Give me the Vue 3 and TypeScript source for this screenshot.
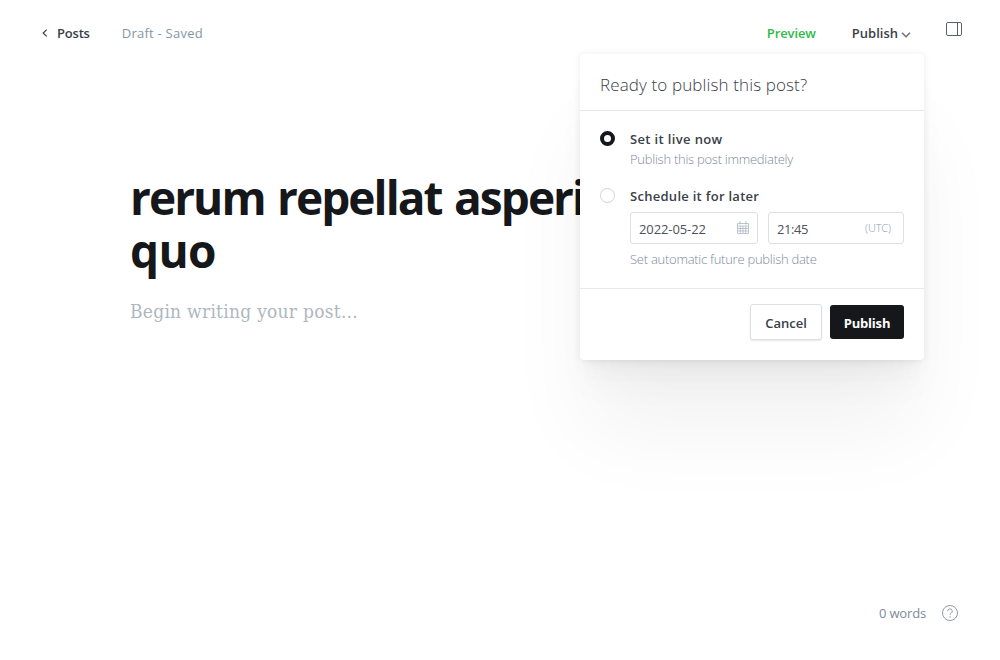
<script setup lang="ts">
import { ref } from 'vue'

type PublishMode = 'now' | 'later'

const mode = ref<PublishMode>('now')
const date = ref('2022-05-22')
const time = ref('21:45')
const wordCount = ref(0)
</script>

<template>
  <div class="editor">
    <header class="bar">
      <a class="back">
        <svg class="chev-left" viewBox="0 0 6 8" width="6" height="8"><path d="M4.7 .6 1.2 4l3.5 3.4" /></svg>
        <span class="posts">Posts</span>
      </a>
      <span class="status">Draft - Saved</span>
      <nav class="actions">
        <span class="preview">Preview</span>
        <span class="publish-trigger">
          <span class="publish-label">Publish</span>
          <svg viewBox="0 0 10 6" width="10" height="6"><path d="M1 .8l4 4 4-4" /></svg>
        </span>
        <svg class="sidebar-icon" viewBox="0 0 16 14" width="16" height="14">
          <rect x=".5" y=".5" width="15" height="13" rx="1.4" />
          <path d="M11.5 .5v13" />
        </svg>
      </nav>

      <section class="popup">
        <h2 class="popup-title"><span>Ready to publish this post?</span></h2>
        <div class="options">
          <div class="option" @click="mode = 'now'">
            <i class="radio" :class="{ on: mode === 'now' }"></i>
            <div class="option-body">
              <div class="label live">Set it live now</div>
              <div class="desc immediate">Publish this post immediately</div>
            </div>
          </div>
          <div class="option second" @click="mode = 'later'">
            <i class="radio" :class="{ on: mode === 'later' }"></i>
            <div class="option-body">
              <div class="label later">Schedule it for later</div>
              <div class="fields">
                <div class="field date">
                  <span class="date-text">{{ date }}</span>
                  <svg class="calendar" viewBox="0 0 12 13" width="12" height="13">
                    <path d="M.5 2.5h11v10H.5zM.5 5h11M.5 7.5h11M.5 10h11M3.3 5v7.5M6 5v7.5M8.7 5v7.5M3 0v3.5M9 0v3.5" />
                  </svg>
                </div>
                <div class="field time">
                  <span class="time-text">{{ time }}</span>
                  <span class="zone">(UTC)</span>
                </div>
              </div>
              <div class="desc future">Set automatic future publish date</div>
            </div>
          </div>
        </div>
        <footer class="buttons">
          <button class="btn cancel"><span>Cancel</span></button>
          <button class="btn primary"><span>Publish</span></button>
        </footer>
      </section>
    </header>

    <main class="canvas">
      <h1 class="title">rerum repellat asperi<br /><span class="title-end">quo</span></h1>
      <p class="placeholder">Begin writing your post...</p>
    </main>

    <footer class="status-bar">
      <span class="words">{{ wordCount }} words</span>
      <svg class="help" viewBox="0 0 16 16" width="16" height="16">
        <circle cx="8" cy="8" r="7.5" />
        <path d="M5.7 6.2a2.3 2.3 0 1 1 3.4 2c-.8.5-1.1.8-1.1 1.7" />
        <circle class="dot" cx="8" cy="12" r=".7" />
      </svg>
    </footer>
  </div>
</template>

<style>
body {
  margin: 0;
  background: #fff;
}
</style>

<style scoped>
.editor {
  width: 1000px;
  height: 660px;
  display: flex;
  flex-direction: column;
  overflow: hidden;
  box-sizing: border-box;
  background: #fff;
  color: #394047;
  font-family: "Segoe UI", "Open Sans", "Noto Sans", sans-serif;
  font-size: 13px;
}
svg {
  display: block;
  flex: none;
  fill: none;
  stroke: #394047;
  stroke-width: 1.2;
}
.bar {
  position: relative;
  z-index: 1;
  height: 66px;
  flex: none;
  display: flex;
  align-items: center;
  padding: 0 38px 0 42px;
  box-sizing: border-box;
  line-height: 20px;
}
.back {
  display: flex;
  align-items: center;
  gap: 9px;
  color: #394047;
  font-weight: 600;
}
.posts { letter-spacing: -0.2px; }
.status {
  margin-left: 32px;
  letter-spacing: 0.24px;
  color: #8496a8;
}
.actions {
  margin-left: auto;
  display: flex;
  align-items: center;
  font-weight: 600;
}
.preview { letter-spacing: -0.1px; color: #30b94a; }
.publish-trigger {
  margin-left: 36px;
  display: flex;
  align-items: center;
  gap: 3px;
}
.publish-trigger svg {
  margin-top: 4px;
  stroke: #6b7178;
  stroke-width: 1.5;
}
.sidebar-icon {
  margin: -8px 0 0 35px;
  stroke: #596067;
  stroke-width: 1;
}
.popup {
  position: absolute;
  left: 580px;
  top: 54px;
  width: 344px;
  height: 306px;
  border-radius: 4px;
  background: #fff;
  box-shadow:
    0 0 7px rgba(0, 0, 0, 0.08),
    0 2.1px 2.2px -5px rgba(0, 0, 0, 0.011),
    0 5.1px 5.3px -5px rgba(0, 0, 0, 0.016),
    0 9.5px 10px -5px rgba(0, 0, 0, 0.02),
    0 17px 17.9px -5px rgba(0, 0, 0, 0.024),
    0 31.8px 33.4px -5px rgba(0, 0, 0, 0.029),
    0 76px 80px -5px rgba(0, 0, 0, 0.05);
}
.popup-title {
  margin: 0;
  height: 57px;
  box-sizing: border-box;
  padding: 19px 20px 0;
  border-bottom: 1px solid #e6e9eb;
  color: #394047;
  font-size: 17px;
  font-weight: 300;
  line-height: 24px;
  letter-spacing: 0.12px;
}
.options {
  height: 178px;
  box-sizing: border-box;
  padding: 20px 20px 0;
  border-bottom: 1px solid #e6e9eb;
}
.option {
  display: flex;
  gap: 15px;
}
.second { margin-top: 19px; }
.radio {
  flex: none;
  width: 15px;
  height: 15px;
  box-sizing: border-box;
  border: 1px solid #ced4d9;
  border-radius: 50%;
}
.radio.on { border: 4px solid #15171a; }
.option-body { flex: 1; }
.label {
  height: 18px;
  line-height: 16px;
  font-weight: 600;
}
.live { letter-spacing: 0.36px; }
.later { letter-spacing: 0.28px; }
.desc {
  line-height: 20px;
  color: #7c8b9a;
  font-weight: 300;
}
.immediate { letter-spacing: -0.26px; }
.fields {
  display: flex;
  gap: 10px;
  margin-top: 6px;
}
.field {
  height: 32px;
  box-sizing: border-box;
  display: flex;
  align-items: center;
  justify-content: space-between;
  border: 1px solid #dddfe1;
  border-radius: 3px;
  color: #4b535b;
}
.field.date { width: 128px; padding: 2px 8px 0; }
.field.time { width: 136px; padding: 2px 12px 0 8px; }
.date-text { letter-spacing: -0.1px; }
.time-text { letter-spacing: -0.4px; }
.calendar {
  margin-top: -3px;
  stroke: #aeb7c1;
  stroke-width: 0.8;
}
.zone {
  margin-top: -3px;
  font-size: 11px;
  font-weight: 300;
  letter-spacing: -0.1px;
  color: #8e9cac;
}
.future {
  margin-top: 5px;
  letter-spacing: -0.26px;
}
.buttons {
  display: flex;
  justify-content: flex-end;
  gap: 8px;
  padding: 15px 20px 0;
}
.btn {
  display: flex;
  align-items: center;
  justify-content: center;
  box-sizing: border-box;
  padding: 2px 0 0;
  border: 0;
  border-radius: 3px;
  background: #fff;
  color: #394047;
  font: inherit;
  font-weight: 600;
}
.cancel {
  width: 72px;
  height: 36px;
  border: 1px solid #dde1e5;
  box-shadow: 0 1px 2px rgba(0, 0, 0, 0.1);
}
.primary {
  width: 74px;
  height: 34px;
  margin-top: 1px;
  background: #15171a;
  color: #fff;
  font-weight: 700;
  letter-spacing: -0.2px;
}
.canvas {
  flex: 1;
  padding: 105px 130px 0;
}
.title {
  margin: 0;
  color: #15171a;
  font-size: 46px;
  font-weight: 700;
  line-height: 53px;
  letter-spacing: -1.95px;
  word-spacing: 2.4px;
}
.title-end { letter-spacing: -0.7px; }
.placeholder {
  margin: 18px 0 0;
  color: #aeb7c1;
  font-family: Georgia, "DejaVu Serif Condensed", "DejaVu Serif", serif;
  font-size: 19px;
  line-height: 32px;
  letter-spacing: 0.26px;
}
.status-bar {
  height: 94px;
  flex: none;
  display: flex;
  justify-content: flex-end;
  align-items: center;
  gap: 16px;
  box-sizing: border-box;
  padding: 0 42px 0 0;
  color: #7c8b9a;
}
.words { letter-spacing: -0.15px; }
.help {
  stroke: #8e9cac;
  stroke-width: 1;
}
.help .dot {
  fill: #8e9cac;
  stroke: none;
}
</style>
